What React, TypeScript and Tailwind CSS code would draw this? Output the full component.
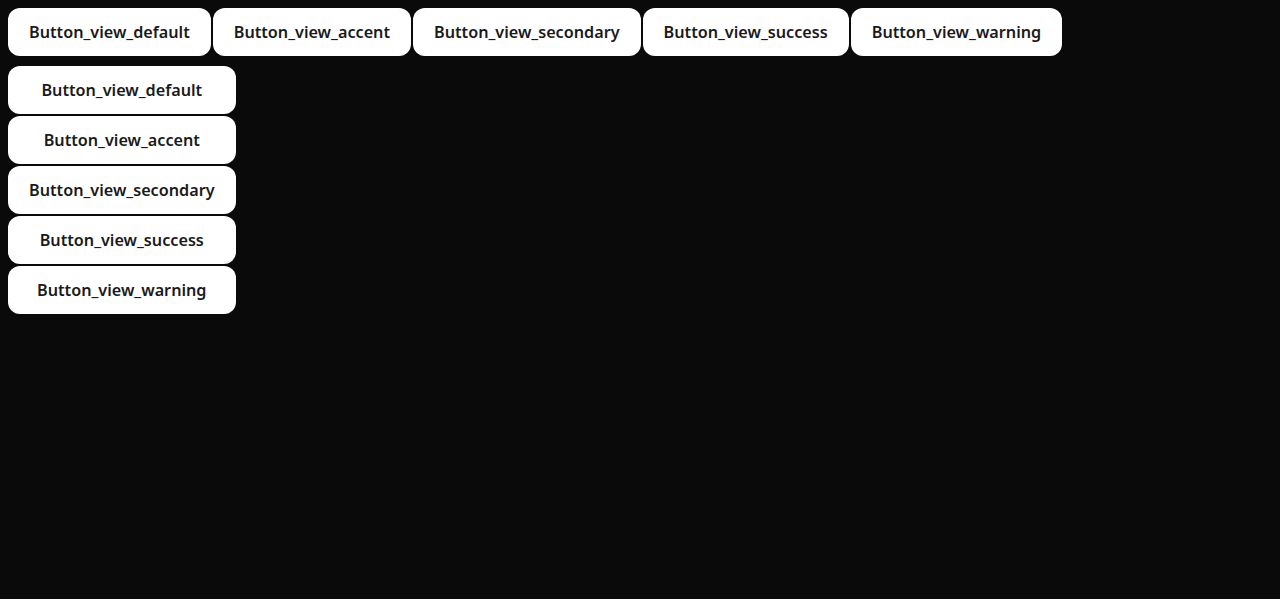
const views = ["default", "accent", "secondary", "success", "warning"];

function ViewButton({ view }: { view: string }) {
  return (
    <button
      type="button"
      className="flex h-12 items-center justify-center rounded-xl bg-white px-[21px] text-[16.2px] font-semibold text-[#1a1a1a]"
    >
      Button_view_{view}
    </button>
  );
}

export default function App() {
  return (
    <div className="min-h-[599px] bg-[#0a0a0a] p-2 font-['Noto_Sans',sans-serif]">
      <div className="flex gap-[2px]">
        {views.map((v) => (
          <ViewButton key={v} view={v} />
        ))}
      </div>
      <div className="mt-[10px] inline-flex flex-col gap-[2px]">
        {views.map((v) => (
          <ViewButton key={v} view={v} />
        ))}
      </div>
    </div>
  );
}
